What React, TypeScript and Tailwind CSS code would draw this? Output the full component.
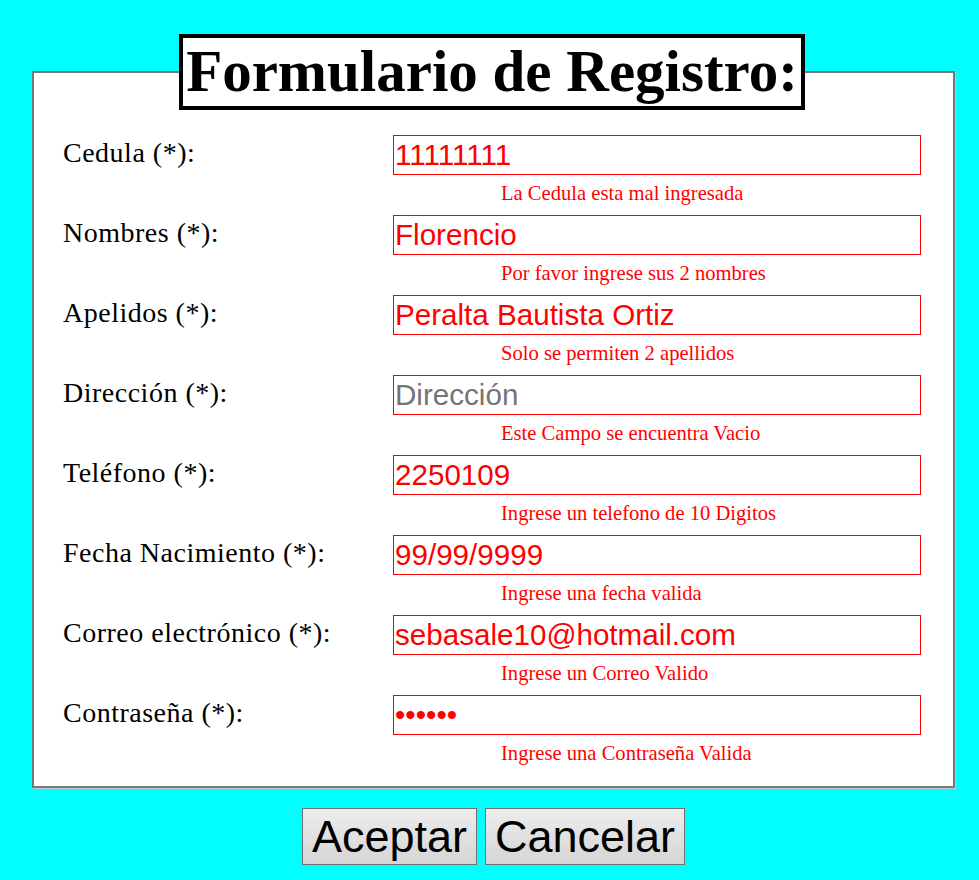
import React from 'react'

interface Field {
  label: string
  value: string
  error: string
  placeholder?: string
  type?: string
}

const fields: Field[] = [
  { label: 'Cedula (*):', value: '11111111', error: 'La Cedula esta mal ingresada' },
  { label: 'Nombres (*):', value: 'Florencio', error: 'Por favor ingrese sus 2 nombres' },
  { label: 'Apelidos (*):', value: 'Peralta Bautista Ortiz', error: 'Solo se permiten 2 apellidos' },
  { label: 'Dirección (*):', value: '', placeholder: 'Dirección', error: 'Este Campo se encuentra Vacio' },
  { label: 'Teléfono (*):', value: '2250109', error: 'Ingrese un telefono de 10 Digitos' },
  { label: 'Fecha Nacimiento (*):', value: '99/99/9999', error: 'Ingrese una fecha valida' },
  { label: 'Correo electrónico (*):', value: 'sebasale10@hotmail.com', error: 'Ingrese un Correo Valido' },
  { label: 'Contraseña (*):', value: '123456', type: 'password', error: 'Ingrese una Contraseña Valida' },
]

export default function App() {
  return (
    <div className="min-h-screen bg-[#00ffff] pt-[34px] font-['Liberation_Serif',serif]">
      <fieldset className="ml-[32px] w-[923px] bg-white border-2 border-[#777777] shadow-[1px_1px_0_#c8c8c8] pl-[29px] pr-[32px] pt-[25px] pb-[11px]">
        <legend className="mx-auto bg-white border-4 border-black px-[3px] text-[59px] font-bold leading-[1.15] text-black">
          Formulario de Registro:
        </legend>

        {fields.map((f) => (
          <div key={f.label} className="flex">
            {/* Label */}
            <div className="w-[330px] shrink-0 pt-[2px] text-[28px] leading-[32px] tracking-[0.5px] text-black">
              {f.label}
            </div>

            {/* Input + error */}
            <div className="flex-1">
              <input
                type={f.type || 'text'}
                defaultValue={f.value}
                placeholder={f.placeholder}
                className="block w-full h-[40px] border border-[#ff0000] bg-white pl-[1px] font-['Liberation_Sans',Arial,sans-serif] text-[29.6px] text-[#ff0000] placeholder:text-[#757575] outline-none"
              />
              <div className="h-[40px] pt-[7px] pl-[108px] text-[20.6px] leading-[1.15] text-[#ff0000]">
                {f.error}
              </div>
            </div>
          </div>
        ))}
      </fieldset>

      {/* Buttons */}
      <div className="ml-[32px] w-[923px] mt-[20px] flex justify-center gap-[8px] font-['Liberation_Sans',Arial,sans-serif]">
        <button className="h-[57px] px-[9px] border border-[#707070] bg-gradient-to-b from-[#ededed] to-[#d5d5d5] text-[45px] leading-none text-black">
          Aceptar
        </button>
        <button className="h-[57px] px-[9px] border border-[#707070] bg-gradient-to-b from-[#ededed] to-[#d5d5d5] text-[45px] leading-none text-black">
          Cancelar
        </button>
      </div>
    </div>
  )
}
